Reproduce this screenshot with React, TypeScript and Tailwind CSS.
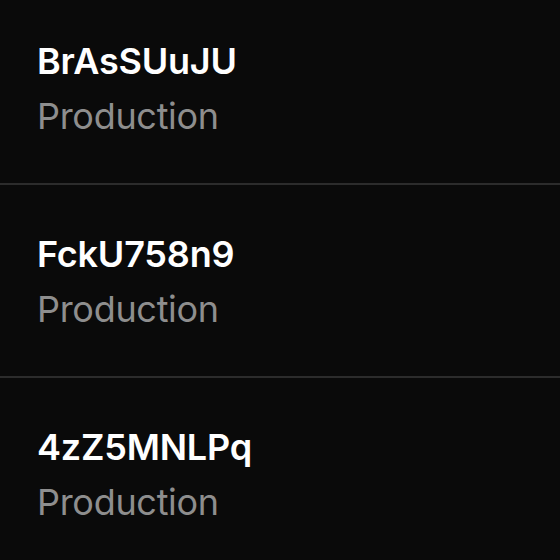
export default function App() {
  const rows = ["BrAsSUuJU", "FckU758n9", "4zZ5MNLPq"];
  return (
    <div className="w-[560px] h-[560px] overflow-hidden bg-[#0a0a0a]" style={{ fontFamily: "Inter, 'Noto Sans', sans-serif" }}>
      <div className="-mt-[8px] flex flex-col">
        {rows.map((r) => (
          <div key={r} className="flex flex-col gap-[15px] pl-[37px] pt-[49px] h-[193px] shrink-0 border-b-2 border-[#2c2c2c]">
            <div className="text-[36px] leading-[40px] font-semibold text-white tracking-[-0.2px]">{r}</div>
            <div className="text-[36px] leading-[40px] text-[#8e8e8e] tracking-[-0.3px]">Production</div>
          </div>
        ))}
      </div>
    </div>
  );
}
